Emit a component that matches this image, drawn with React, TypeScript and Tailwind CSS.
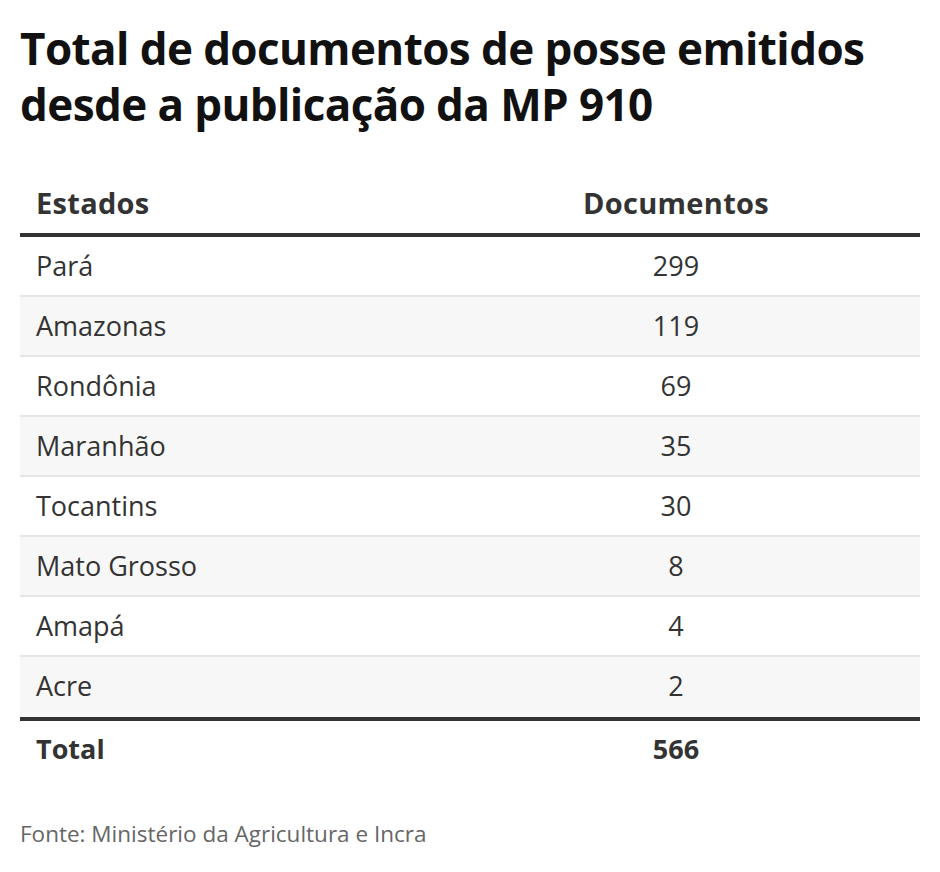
const rows = [
  { estado: "Pará", docs: 299 },
  { estado: "Amazonas", docs: 119 },
  { estado: "Rondônia", docs: 69 },
  { estado: "Maranhão", docs: 35 },
  { estado: "Tocantins", docs: 30 },
  { estado: "Mato Grosso", docs: 8 },
  { estado: "Amapá", docs: 4 },
  { estado: "Acre", docs: 2 },
];

export default function App() {
  return (
    <div className="w-[940px] min-h-[872px] bg-white px-5 font-['Open_Sans',sans-serif] text-[#333]">
      <h1 className="pt-[20px] text-[44px] font-bold leading-[56px] tracking-[-0.6px] text-[#111]">
        Total de documentos de posse emitidos desde a publicação da MP 910
      </h1>

      <div className="mt-[53px] w-[900px]">
        <div className="grid grid-cols-[412px_1fr] border-b-4 border-[#333] pb-3 text-[29px] font-bold leading-9 tracking-[0.3px]">
          <div className="pl-[16px]">Estados</div>
          <div className="text-center">Documentos</div>
        </div>

        {rows.map((row, i) => (
          <div
            key={row.estado}
            className={`grid h-[60px] grid-cols-[412px_1fr] items-center border-b-2 text-[27px] ${
              i === rows.length - 1 ? "border-transparent" : "border-[#e6e6e6]"
            } ${i % 2 === 1 ? "bg-[#f7f7f7]" : "bg-white"}`}
          >
            <div className="pl-[16px]">{row.estado}</div>
            <div className="text-center">{row.docs}</div>
          </div>
        ))}

        <div className="grid h-[60px] grid-cols-[412px_1fr] items-center border-t-4 border-[#333] text-[27px] font-bold">
          <div className="pl-[16px]">Total</div>
          <div className="text-center">566</div>
        </div>
      </div>

      <p className="mt-10 text-[22.5px] text-[#666]">Fonte: Ministério da Agricultura e Incra</p>
    </div>
  );
}
